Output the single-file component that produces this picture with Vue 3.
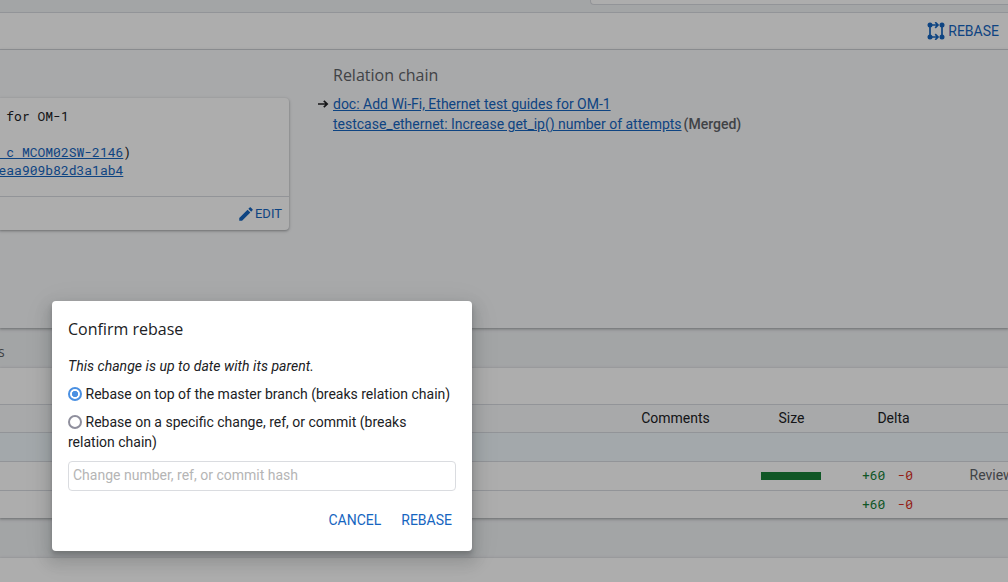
<script setup>
import { ref } from 'vue'

const rebaseTarget = ref('tip')
const baseText = ref('')
const rows = [
  { bar: true, added: '+60', removed: '-0', status: 'Reviewed' },
  { bar: false, added: '+60', removed: '-0', status: '' },
]
</script>

<template>
  <div class="screen">
    <main class="page">
      <header class="topbar"><div class="search"></div></header>
      <div class="actions">
        <a class="action">
          <svg class="rebase-icon" viewBox="0 0 18 18" width="18" height="18">
            <g fill="none" stroke="currentColor" stroke-width="1.7">
              <path d="M3 3v12M15 3v12M3 3h8M3 15h8M8.2 0.2l2.8 2.8-2.8 2.8M8.2 12.2l2.8 2.8-2.8 2.8" />
            </g>
            <g fill="currentColor">
              <circle cx="3" cy="3" r="2.5" /><circle cx="15" cy="3" r="2.5" />
              <circle cx="3" cy="15" r="2.5" /><circle cx="15" cy="15" r="2.5" />
            </g>
          </svg>
          <span>REBASE</span>
        </a>
      </div>
      <section class="info">
        <article class="commit">
          <div class="message">
            <div> for OM-1</div>
            <div>&nbsp;</div>
            <div><a> c MCOM02SW-2146</a>)</div>
            <div><a>eaa909b82d3a1ab4</a></div>
          </div>
          <footer class="commit-foot">
            <a class="edit">
              <svg viewBox="0 0 24 24" width="18" height="18" fill="currentColor">
                <path d="M3 17.25V21h3.75L17.81 9.94l-3.75-3.75L3 17.25zM20.71 7.04c.39-.39.39-1.02 0-1.41l-2.34-2.34c-.39-.39-1.02-.39-1.41 0l-1.83 1.83 3.75 3.75 1.83-1.83z" />
              </svg><span>EDIT</span>
            </a>
          </footer>
        </article>
        <aside class="relation">
          <h3>Relation chain</h3>
          <div class="rel">
            <svg class="arrow" viewBox="0 0 12 10" width="12" height="10" fill="none" stroke="currentColor" stroke-width="1.7">
              <path d="M1 5h9M6.8 1.8L10.2 5 6.8 8.2" />
            </svg>
            <a>doc: Add Wi-Fi, Ethernet test guides for OM-1</a>
          </div>
          <div class="rel">
            <span class="arrow"></span>
            <a class="long">testcase_ethernet: Increase get_ip() number of attempts</a><b>(Merged)</b>
          </div>
        </aside>
      </section>
      <nav class="tabs">s</nav>
      <section class="files">
        <div class="toolbar"></div>
        <div class="row head">
          <span></span><span>Comments</span><span>Size</span><span>Delta</span><span></span>
        </div>
        <div class="row commitrow"></div>
        <div v-for="(r, i) in rows" :key="i" class="row">
          <span></span><span></span>
          <span><i v-if="r.bar" class="bar"></i></span>
          <span class="delta"><em class="add">{{ r.added }}</em><em class="del">{{ r.removed }}</em></span>
          <span class="status">{{ r.status }}</span>
        </div>
      </section>
      <div class="gap"></div>
      <section class="log"></section>
    </main>

    <div class="backdrop"></div>
    <div class="dialog">
      <h2>Confirm rebase</h2>
      <p class="note">This change is up to date with its parent.</p>
      <label class="option"><input v-model="rebaseTarget" type="radio" value="tip">Rebase on top of the master branch (breaks relation chain)</label>
      <label class="option second"><input v-model="rebaseTarget" type="radio" value="other">Rebase on a specific change, ref, or commit (breaks relation chain)</label>
      <input v-model="baseText" class="base" type="text" placeholder="Change number, ref, or commit hash">
      <div class="buttons"><button>CANCEL</button><button>REBASE</button></div>
    </div>
  </div>
</template>

<style>
body { margin: 0; overflow: hidden; }
</style>

<style scoped>
* { box-sizing: border-box; }
.screen {
  position: relative;
  width: 1008px;
  height: 582px;
  overflow: hidden;
  font: 14px/20px Roboto, sans-serif;
  color: #202124;
}
.page { display: flex; flex-direction: column; height: 582px; background: #f1f3f5; }
.topbar { height: 13px; border-bottom: 1px solid #d8dae0; display: flex; justify-content: flex-end; flex: none; }
.search { width: 418px; height: 5px; background: #fff; border: 1px solid #d8dae0; border-width: 0 0 1px 1px; border-radius: 0 0 0 4px; }
.actions {
  height: 37px; flex: none; background: #fff; border-bottom: 1px solid #d8dae0;
  display: flex; justify-content: flex-end; align-items: center; padding-right: 9px;
}
a { color: #1565c0; }
.action { display: flex; align-items: center; gap: 3px; }
.rebase-icon { display: block; }
.info {
  height: 278px; flex: none; display: flex; align-items: flex-start; background: #f8f9fb;
  position: relative;
  box-shadow: 0 1px 2px 0 rgba(60,64,67,.3), 0 1px 3px 1px rgba(60,64,67,.15);
}
.commit {
  width: 289px; height: 132px; margin-top: 48px; background: #fff; border-radius: 0 4px 4px 0;
  box-shadow: 0 1px 2px 0 rgba(60,64,67,.3), 0 1px 3px 1px rgba(60,64,67,.15);
}
.message { height: 98px; padding-top: 9px; text-indent: -1.5px; font: 13px/18px "Roboto Mono", "Liberation Mono", monospace; white-space: pre; }
.message a, .rel a { text-decoration: underline; }
.commit-foot {
  height: 34px; border-top: 1px solid #d8dae0; display: flex; justify-content: flex-end;
  align-items: center; padding-right: 7px;
}
.edit { display: flex; align-items: center; font-size: 13px; }
.relation { margin: 15px 0 0 28px; }
h3 { margin: 0 0 9px 16px; font: 400 16px/20px "Open Sans", sans-serif; color: #5f6368; }
.rel { display: flex; align-items: center; height: 20px; }
.arrow { width: 12px; margin-right: 4px; flex: none; }
.rel a { letter-spacing: -.01px; }
.rel b { font-weight: 500; color: #5f6368; margin-left: 2px; }
.tabs { height: 40px; flex: none; line-height: 48px; text-indent: -2px; color: #5f6368; font-family: "Open Sans", sans-serif; }
.files, .log { background: #fff; box-shadow: 0 1px 2px 0 rgba(60,64,67,.3), 0 1px 3px 1px rgba(60,64,67,.15); }
.files { flex: none; height: 150px; }
.toolbar { height: 36px; }
.row {
  height: 29px; border-top: 1px solid #d8dae0; display: grid; align-items: center;
  grid-template-columns: 626px 99px 133px 71px 79px; text-align: center;
  padding-bottom: 2px;
}
.head { height: 28px; background: #f8f9fb; }
.commitrow { background: #f1f8fd; }
.row:last-child { height: 28px; }
.bar { display: block; width: 60px; height: 8px; background: #188038; margin: 2px 0 0 36px; }
.delta { font: 13px/20px "Roboto Mono", "Liberation Mono", monospace; padding-left: 4px; display: flex; gap: 12px; }
.delta em { font-style: normal; }
.add { color: #188038; }
.del { color: #d93025; }
.status { text-align: left; padding-left: 40.5px; color: #5f6368; }
.gap { height: 40px; flex: none; }
.log { height: 40px; flex: none; }
.backdrop { position: absolute; inset: 0; background: rgba(0,0,0,.32); }
.dialog {
  position: absolute; left: 52px; top: 301px; width: 420px; height: 250px; padding: 16px;
  background: #fff; border-radius: 4px;
  box-shadow: 0 4px 4px 0 rgba(60,64,67,.3), 0 8px 12px 6px rgba(60,64,67,.15), 0 6px 30px 5px rgba(0,0,0,.05);
}
h2 { margin: 0; font: 400 16px/24px "Open Sans", sans-serif; }
.note { margin: 15px 0 8px; font-style: italic; letter-spacing: .04px; }
.option { display: block; }
.second { margin-top: 8px; }
.option input {
  appearance: none; width: 14px; height: 14px; margin: 0 3.5px 0 0; border: 2px solid #8f8f9d;
  border-radius: 50%; vertical-align: -2px; background: #fff;
}
.option input:checked { border-color: #4a90e2; background: radial-gradient(circle, #4a90e2 0 2.8px, #fff 3.5px); }
.base {
  display: block; width: 388px; height: 30px; margin-top: 9px; padding: 0 4px 2px; border: 1px solid #dadce0;
  border-radius: 4px; font: 14px/20px Roboto, sans-serif; color: #202124; background: #fff; outline: 0;
}
.base::placeholder { color: #b5b5b5; opacity: 1; }
.buttons { display: flex; justify-content: flex-end; gap: 20px; margin-top: 19px; padding-right: 4px; }
button { border: 0; padding: 0; background: none; font: 14px/20px Roboto, sans-serif; color: #1565c0; }
</style>
